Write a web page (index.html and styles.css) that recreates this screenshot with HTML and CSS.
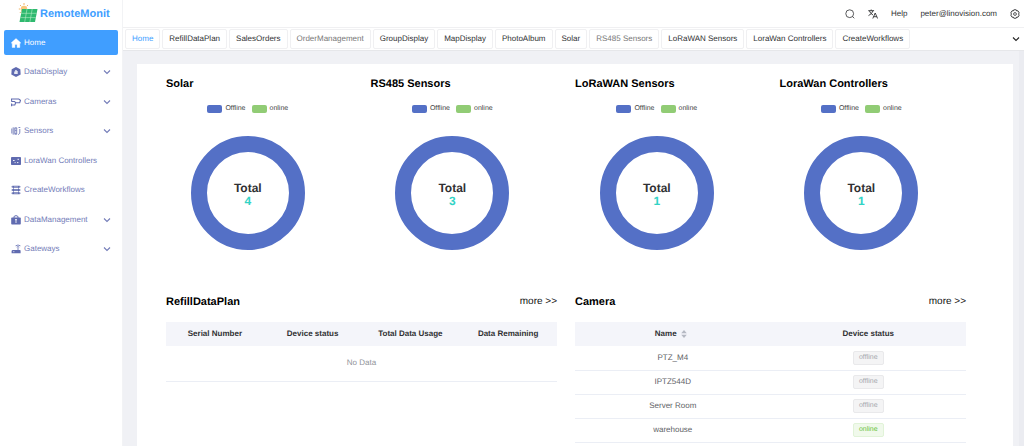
FILE: index.html
```html
<!DOCTYPE html>
<html lang="en">
<head>
<meta charset="utf-8">
<title>RemoteMonit</title>
<link rel="stylesheet" href="styles.css">
</head>
<body>
<svg class="defs" aria-hidden="true">
  <symbol id="chevron" viewBox="0 0 8 8"><path d="M1 2.5 4 5.5 7 2.5" fill="none" stroke="currentColor" stroke-width="1.1"/></symbol>
</svg>
<div class="app">
  <aside class="sidebar">
    <a class="brand" href="#">
      <svg class="brand-logo" viewBox="0 0 20 20" aria-hidden="true">
        <circle cx="6" cy="6" r="3.200" fill="#f8c77c"/>
        <path d="M6 0v2M0.800 6h1.500M2 2l1.200 1.200M10 2 8.800 3.200M1.800 10l1.200-1.200" stroke="#f2b568" stroke-width="1"/>
        <path d="M4 6H19.500L17 19H1.500z" fill="#2fb96f"/>
        <path d="M9 6 6.700 19M14.200 6 11.900 19M3.300 10.300h15.300M2.500 14.600h15.300" stroke="#b5ecc5" stroke-width=".6"/>
      </svg>
      <span>RemoteMonit</span>
    </a>
    <nav class="menu">
      <a class="menu-item active" href="#">
        <svg class="menu-icon" viewBox="0 0 10 10"><path d="M5 .6.5 4.600V5.200h.7V9.500h2.700V6.400h2.200v3.100h2.700V5.200h.7V4.600z" fill="currentColor" stroke="currentColor" stroke-width=".4" stroke-linejoin="round"/></svg>
        <span>Home</span>
      </a>
      <a class="menu-item" href="#">
        <svg class="menu-icon" viewBox="0 0 10 10"><path d="M5 0 9.300 2.200 9.700 7.500 5 10 .3 7.500.7 2.200z" fill="currentColor"/><path d="M3.200 4.500h1V3h1.500v1h1v3H3.200z" fill="#fff" opacity=".85"/></svg>
        <span>DataDisplay</span>
        <svg class="arrow"><use href="#chevron"/></svg>
      </a>
      <a class="menu-item" href="#">
        <svg class="menu-icon" viewBox="0 0 10 10"><path d="M.4 2h7.400l1.700 1.200-.8 2.600H5L3.500 4.500H.8zM4.700 5.800 3.800 8H.6M.6 6.400v2.800" fill="none" stroke="currentColor" stroke-width="1.100"/></svg>
        <span>Cameras</span>
        <svg class="arrow"><use href="#chevron"/></svg>
      </a>
      <a class="menu-item" href="#">
        <svg class="menu-icon" viewBox="0 0 10 10"><path d="M.8 2.500v5M2.200 1.300v7.400" stroke="currentColor" stroke-width=".8"/><rect x="3.200" y="1.200" width="3" height="7.600" rx="1" fill="currentColor" opacity=".75"/><path d="M4 3.200h1.400M4.700 5v2" stroke="#fff" stroke-width=".7"/><path d="M7.200 8.500c1.300-.3 1.600-1.200 1.600-2.500V3M7.500 1.500h1.800" fill="none" stroke="currentColor" stroke-width=".8"/></svg>
        <span>Sensors</span>
        <svg class="arrow"><use href="#chevron"/></svg>
      </a>
      <a class="menu-item" href="#">
        <svg class="menu-icon" viewBox="0 0 10 10"><rect x="0" y="1" width="10" height="8" rx=".8" fill="currentColor"/><path d="M2 4.500h1.600M6.500 3.300H8M6 6.600h1.400M3.600 6.600h1" stroke="#fff" stroke-width=".9"/></svg>
        <span>LoraWan Controllers</span>
      </a>
      <a class="menu-item" href="#">
        <svg class="menu-icon" viewBox="0 0 10 10"><path d="M1.300 1.800h7.400M1.300 5h7.400M1.300 8.200h7.400" stroke="currentColor" stroke-width="2"/><path d="M.2 1.800h9.600M.2 5h9.600M.2 8.200h9.600M2.500 1v8M7.500 1v8" stroke="currentColor" stroke-width=".6"/><path d="M3 1.800h4M3 5h4M3 8.200h4" stroke="#fff" stroke-width=".4"/></svg>
        <span>CreateWorkflows</span>
      </a>
      <a class="menu-item" href="#">
        <svg class="menu-icon" viewBox="0 0 10 10"><path d="M3 3V1.900Q3 .7 5 .7t2 1.200V3" fill="none" stroke="currentColor" stroke-width="1"/><rect x=".2" y="2.600" width="9.600" height="7" rx=".8" fill="currentColor"/><path d="M5 4v4M4 4.700h2" stroke="#fff" stroke-width=".8"/></svg>
        <span>DataManagement</span>
        <svg class="arrow"><use href="#chevron"/></svg>
      </a>
      <a class="menu-item" href="#">
        <svg class="menu-icon" viewBox="0 0 10 10"><path d="M1.500 6h7.600l.5.800v2.500H.6V6.800z" fill="currentColor"/><path d="M7 6V3.500M4.600 1.800Q7 .2 9.400 1.800M5.700 3.100Q7 2.200 8.300 3.100" fill="none" stroke="currentColor" stroke-width=".8"/><path d="M2 7.700h1.500" stroke="#fff" stroke-width=".6"/></svg>
        <span>Gateways</span>
        <svg class="arrow"><use href="#chevron"/></svg>
      </a>
    </nav>
  </aside>

  <div class="page">
    <header class="topbar">
      <button class="icon-button" aria-label="Search"><svg viewBox="0 0 10 10"><circle cx="4.700" cy="4.700" r="3.900" fill="none" stroke="currentColor" stroke-width=".8"/><path d="M7.500 7.500 9.300 9.300" stroke="currentColor" stroke-width=".8"/></svg></button>
      <button class="icon-button" aria-label="Language"><svg viewBox="0 0 10 10"><path d="M.3 1.700h5.800M3.200.5v1.200M1.300 1.700Q2.400 4.800 5 6M5.100 1.700Q4 5 .5 6.600M4.800 9.500 7.200 4l2.400 5.500M5.600 7.700h3.200" fill="none" stroke="currentColor" stroke-width=".9"/></svg></button>
      <a href="#">Help</a>
      <a href="#">peter@linovision.com</a>
      <button class="icon-button" aria-label="Settings"><svg viewBox="0 0 10 10"><path d="M3.800.8h2.400l.5 1.100 1.300-.1L9.200 3.900 8.500 5l.7 1.100L8 8.200l-1.300-.1-.5 1.100H3.800l-.5-1.100L2 8.200.8 6.100 1.500 5 .8 3.900 2 1.800l1.300.1z" fill="none" stroke="currentColor" stroke-width=".9"/><circle cx="5" cy="5" r="1.400" fill="none" stroke="currentColor" stroke-width=".8"/></svg></button>
    </header>
    <nav class="tabs">
      <a class="tab current" href="#">Home</a>
      <a class="tab" href="#">RefillDataPlan</a>
      <a class="tab" href="#">SalesOrders</a>
      <a class="tab muted" href="#">OrderManagement</a>
      <a class="tab" href="#">GroupDisplay</a>
      <a class="tab" href="#">MapDisplay</a>
      <a class="tab" href="#">PhotoAlbum</a>
      <a class="tab" href="#">Solar</a>
      <a class="tab muted" href="#">RS485 Sensors</a>
      <a class="tab" href="#">LoRaWAN Sensors</a>
      <a class="tab" href="#">LoraWan Controllers</a>
      <a class="tab" href="#">CreateWorkflows</a>
      <button class="tabs-more" aria-label="More tabs"><svg class="arrow"><use href="#chevron"/></svg></button>
    </nav>
    <main class="content">
      <div class="board">
        <div class="charts">
          <section class="chart">
            <h2>Solar</h2>
            <div class="plot">
              <div class="legend"><span class="key offline">Offline</span><span class="key online">online</span></div>
              <div class="donut"><span>Total</span><span class="count">4</span></div>
            </div>
          </section>
          <section class="chart">
            <h2>RS485 Sensors</h2>
            <div class="plot">
              <div class="legend"><span class="key offline">Offline</span><span class="key online">online</span></div>
              <div class="donut"><span>Total</span><span class="count">3</span></div>
            </div>
          </section>
          <section class="chart">
            <h2>LoRaWAN Sensors</h2>
            <div class="plot">
              <div class="legend"><span class="key offline">Offline</span><span class="key online">online</span></div>
              <div class="donut"><span>Total</span><span class="count">1</span></div>
            </div>
          </section>
          <section class="chart">
            <h2>LoraWan Controllers</h2>
            <div class="plot">
              <div class="legend"><span class="key offline">Offline</span><span class="key online">online</span></div>
              <div class="donut"><span>Total</span><span class="count">1</span></div>
            </div>
          </section>
        </div>
        <div class="lists">
          <section class="list">
            <div class="list-head"><h2>RefillDataPlan</h2><a href="#">more &gt;&gt;</a></div>
            <table>
              <thead><tr><th>Serial Number</th><th>Device status</th><th>Total Data Usage</th><th>Data Remaining</th></tr></thead>
              <tbody><tr><td class="empty" colspan="4">No Data</td></tr></tbody>
            </table>
          </section>
          <section class="list">
            <div class="list-head"><h2>Camera</h2><a href="#">more &gt;&gt;</a></div>
            <table>
              <thead><tr>
                <th><span class="sortable">Name<button class="sort" aria-label="Sort by name"><svg viewBox="0 0 6 8"><path d="M3 0 5.800 3.300H.2zM3 8 5.800 4.700H.2z" fill="currentColor"/></svg></button></span></th>
                <th>Device status</th>
              </tr></thead>
              <tbody>
                <tr><td>PTZ_M4</td><td><span class="tag">offline</span></td></tr>
                <tr><td>IPTZ544D</td><td><span class="tag">offline</span></td></tr>
                <tr><td>Server Room</td><td><span class="tag">offline</span></td></tr>
                <tr><td>warehouse</td><td><span class="tag up">online</span></td></tr>
              </tbody>
            </table>
          </section>
        </div>
      </div>
    </main>
  </div>
</div>
</body>
</html>
```
FILE: styles.css
```css
* { box-sizing: border-box; }

body {
  margin: 0;
  font: 8px/12px "Liberation Sans", Arial, sans-serif;
  text-rendering: geometricPrecision;
  color: #303133;
  background: #fff;
}

a { color: inherit; text-decoration: none; }
button { padding: 0; border: 0; background: none; color: inherit; font: inherit; }
svg { display: block; }
h2 { margin: 0; font-size: 11px; line-height: 14px; color: #000; }

.defs { display: none; }
.app { display: flex; min-height: 100vh; }

.sidebar { flex: 0 0 123px; border-right: 1px solid #f2f3f5; }
.brand {
  display: flex;
  align-items: center;
  gap: 2px;
  height: 30px;
  padding: 0 0 2px 18px;
  color: #409eff;
  font-size: 11px;
  font-weight: bold;
}
.brand-logo { width: 20px; height: 20px; margin-bottom: 3px; }
.menu {
  display: flex;
  flex-direction: column;
  justify-content: space-between;
  height: 232px;
  padding: 0 4px;
}
.menu-item {
  display: flex;
  align-items: center;
  gap: 3px;
  height: 25px;
  padding: 0 7px;
  border-radius: 2px;
  color: #737cb8;
}
.menu-item.active { background: #409eff; color: #fff; }
.menu-icon { width: 10px; height: 10px; color: #606bb0; }
.active .menu-icon { color: #fff; }
.arrow { width: 8px; height: 8px; }
.menu-item .arrow { margin-left: auto; }

.page { display: flex; flex: 1; flex-direction: column; min-width: 0; }
.topbar {
  display: flex;
  align-items: center;
  justify-content: flex-end;
  gap: 13px;
  height: 28px;
  padding-right: 4px;
  border-bottom: 1px solid #f0f0f2;
}
.icon-button svg { width: 10px; height: 10px; }

.tabs {
  display: flex;
  align-items: center;
  gap: 2px;
  height: 23px;
  padding: 0 4px 0 2px;
  border-bottom: 1px solid #e6e7ea;
}
.tab {
  padding: 2px 6px;
  border: 1px solid #f0f0f2;
  border-radius: 2px;
  line-height: 14px;
  white-space: nowrap;
}
.tab.current { color: #409eff; }
.tab.muted { color: #777; }
.tabs-more { margin-left: auto; }
.tabs-more .arrow { color: #222; }

.content {
  flex: 1;
  display: flex;
  padding: 13px 6px 0 14px;
  border-right: 5px solid #ebecf1;
  background: #f0f1f5;
}
.board { flex: 1; padding: 13px 29px 0; background: #fff; }

.charts { display: grid; grid-template-columns: repeat(4, 1fr); }
.plot {
  display: flex;
  flex-direction: column;
  align-items: center;
  gap: 21px;
  width: 80%;
  padding: 12px 0 45px;
}
.legend { display: flex; gap: 6px; font-size: 7px; color: #444; }
.key { display: flex; align-items: center; gap: 3px; }
.key::before { content: ""; width: 15px; height: 8px; border-radius: 2px; background: #5470c6; }
.key.online::before { background: #91cc75; }
.donut {
  display: flex;
  flex-direction: column;
  align-items: center;
  justify-content: center;
  width: 114px;
  height: 114px;
  padding-top: 4px;
  border: 16px solid #5470c6;
  border-radius: 50%;
  font-size: 12px;
  line-height: 13px;
  font-weight: bold;
}
.count { color: #32d3c5; }

.lists { display: grid; grid-template-columns: repeat(2, 1fr); }
.list { padding-right: 18px; }
.list-head { display: flex; align-items: center; justify-content: space-between; margin-bottom: 13px; }
.list-head a { font-size: 10px; line-height: 14px; color: #111; }
table { width: 100%; table-layout: fixed; border-collapse: collapse; }
th, td { height: 24px; padding: 0; text-align: center; }
th { background: #f4f5fa; color: #303133; }
td { border-bottom: 1px solid #ebeef5; color: #606266; }
.empty { height: 35px; color: #909399; }
.sortable { display: inline-flex; align-items: center; }
.sort { width: 14px; color: #b5b9c3; }
.sort svg { width: 6px; height: 8px; margin: 0 auto; }
.tag {
  display: inline-block;
  padding: 0 5px;
  border: 1px solid #e9e9eb;
  border-radius: 2px;
  background: #f4f4f5;
  color: #a4a7ad;
  font-size: 7px;
}
.tag.up { border-color: #e1f3d8; background: #f0f9eb; color: #67c23a; }
```
